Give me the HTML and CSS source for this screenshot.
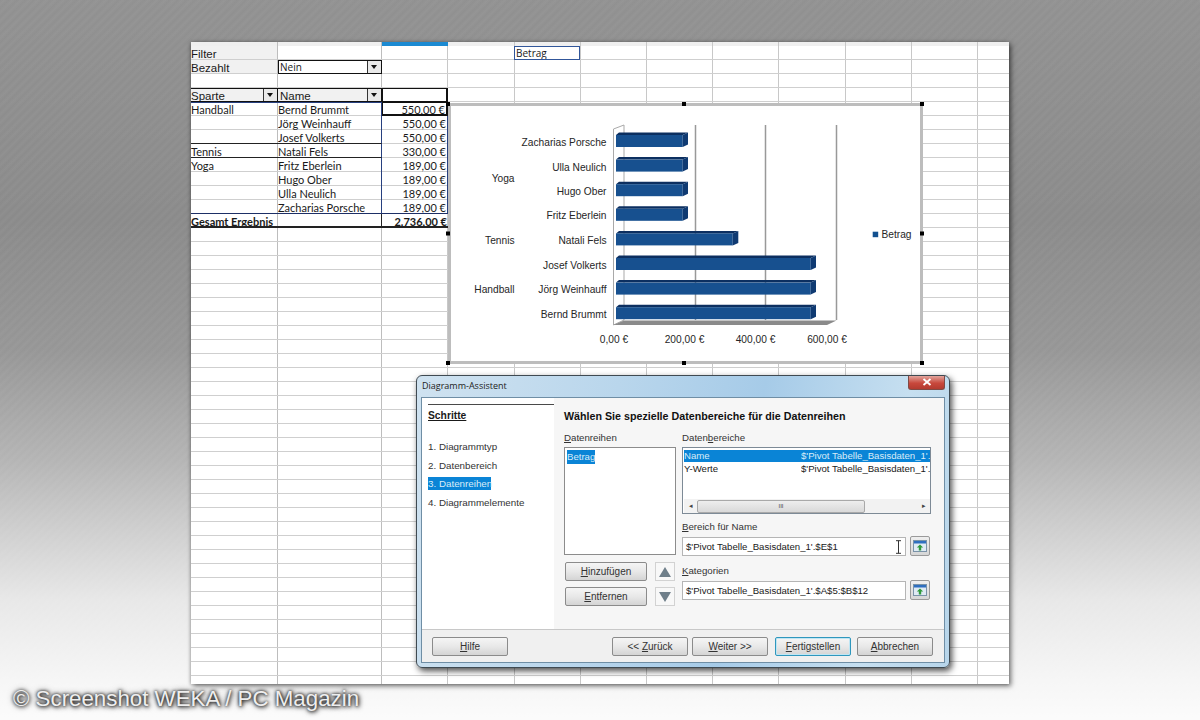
FILE: index.html
```html
<!DOCTYPE html>
<html lang="de">
<head>
<meta charset="utf-8">
<title>Diagramm-Assistent</title>
<link rel="stylesheet" href="styles.css">
</head>
<body>
<main class="stage">
  <section class="sheet">
    <div class="col-head"><span class="col-active"></span></div>
    <div class="pivot">
      <div class="cell label-cell">Filter</div><div class="cell"></div><div class="cell"></div><div class="cell"></div><div class="cell betrag">Betrag</div>
      <div class="cell label-cell">Bezahlt</div><div class="cell select-cell">Nein<span class="drop"></span></div><div class="cell wide"></div>
      <div class="cell full"></div>
      <div class="cell head-cell">Sparte<span class="drop"></span></div><div class="cell head-cell">Name<span class="drop"></span></div><div class="cell head-box"></div><div class="cell"></div><div class="cell"></div>

      <div class="cell top-navy">Handball</div><div class="cell top-navy name">Bernd Brummt</div><div class="cell amount active">550,00 €</div><div class="cell"></div><div class="cell"></div>
      <div class="cell"></div><div class="cell name">Jörg Weinhauff</div><div class="cell amount">550,00 €</div><div class="cell"></div><div class="cell"></div>
      <div class="cell group-end"></div><div class="cell name group-end">Josef Volkerts</div><div class="cell amount">550,00 €</div><div class="cell"></div><div class="cell"></div>
      <div class="cell group-end">Tennis</div><div class="cell name group-end">Natali Fels</div><div class="cell amount">330,00 €</div><div class="cell"></div><div class="cell"></div>
      <div class="cell">Yoga</div><div class="cell name">Fritz Eberlein</div><div class="cell amount">189,00 €</div><div class="cell"></div><div class="cell"></div>
      <div class="cell"></div><div class="cell name">Hugo Ober</div><div class="cell amount">189,00 €</div><div class="cell"></div><div class="cell"></div>
      <div class="cell"></div><div class="cell name">Ulla Neulich</div><div class="cell amount">189,00 €</div><div class="cell"></div><div class="cell"></div>
      <div class="cell last-row"></div><div class="cell name last-row">Zacharias Porsche</div><div class="cell amount last-row">189,00 €</div><div class="cell"></div><div class="cell"></div>
      <div class="cell total">Gesamt Ergebnis</div><div class="cell total"></div><div class="cell total amount">2.736,00 €</div><div class="cell"></div><div class="cell"></div>
    </div>

    <svg class="chart" viewBox="444 100 482 268" width="482" height="268">
      <rect class="chart-bg" x="449.5" y="104.5" width="472" height="258"/>
      <g class="walls">
        <polygon class="wall" points="613.5,129 624,125 624,320 613.5,325"/>
        <polygon class="floor" points="613.5,325 624,320.5 836.5,320.5 827,325"/>
        <path class="grid" d="M695.5 125V320M765.5 125V320M836.5 125V320"/>
      </g>
      <g>
        <polygon class="bar-top" points="616,135 619,132.500 688,132.500 682.700,135"/><rect class="bar-front" x="616" y="135" width="66.700" height="12"/><polygon class="bar-side" points="682.700,135 688,132.500 688,144.500 682.700,147"/>
        <polygon class="bar-top" points="616,159.600 619,157.100 688,157.100 682.700,159.600"/><rect class="bar-front" x="616" y="159.600" width="66.700" height="12"/><polygon class="bar-side" points="682.700,159.600 688,157.100 688,169.100 682.700,171.600"/>
        <polygon class="bar-top" points="616,184.200 619,181.700 688,181.700 682.700,184.200"/><rect class="bar-front" x="616" y="184.200" width="66.700" height="12"/><polygon class="bar-side" points="682.700,184.200 688,181.700 688,193.700 682.700,196.200"/>
        <polygon class="bar-top" points="616,208.800 619,206.300 688,206.300 682.700,208.800"/><rect class="bar-front" x="616" y="208.800" width="66.700" height="12"/><polygon class="bar-side" points="682.700,208.800 688,206.300 688,218.300 682.700,220.800"/>
        <polygon class="bar-top" points="616,233.400 619,230.900 738.300,230.900 732.700,233.400"/><rect class="bar-front" x="616" y="233.400" width="116.700" height="12"/><polygon class="bar-side" points="732.700,233.400 738.300,230.900 738.300,242.900 732.700,245.400"/>
        <polygon class="bar-top" points="616,258 619,255.500 816,255.500 810.700,258"/><rect class="bar-front" x="616" y="258" width="194.700" height="12"/><polygon class="bar-side" points="810.700,258 816,255.500 816,267.500 810.700,270"/>
        <polygon class="bar-top" points="616,282.600 619,280.100 816,280.100 810.700,282.600"/><rect class="bar-front" x="616" y="282.600" width="194.700" height="12"/><polygon class="bar-side" points="810.700,282.600 816,280.100 816,292.100 810.700,294.600"/>
        <polygon class="bar-top" points="616,307.200 619,304.700 816,304.700 810.700,307.200"/><rect class="bar-front" x="616" y="307.200" width="194.700" height="12"/><polygon class="bar-side" points="810.700,307.200 816,304.700 816,316.700 810.700,319.200"/>
      </g>
      <g class="axis-end">
        <text x="606.500" y="146">Zacharias Porsche</text>
        <text x="606.500" y="171">Ulla Neulich</text>
        <text x="606.500" y="195">Hugo Ober</text>
        <text x="606.500" y="219">Fritz Eberlein</text>
        <text x="606.500" y="244">Natali Fels</text>
        <text x="606.500" y="269">Josef Volkerts</text>
        <text x="606.500" y="293">Jörg Weinhauff</text>
        <text x="606.500" y="318">Bernd Brummt</text>
        <text x="514.500" y="182">Yoga</text>
        <text x="514.500" y="244">Tennis</text>
        <text x="514.500" y="293">Handball</text>
      </g>
      <g class="axis-mid">
        <text x="614" y="343">0,00 €</text>
        <text x="684.500" y="343">200,00 €</text>
        <text x="755.500" y="343">400,00 €</text>
        <text x="827" y="343">600,00 €</text>
      </g>
      <rect class="bar-legend" x="872.700" y="231.700" width="5.500" height="5.500"/>
      <text class="legend" x="881.500" y="238">Betrag</text>
      <g class="handles">
        <rect x="446" y="102" width="4" height="4"/><rect x="682" y="102" width="4" height="4"/><rect x="920" y="102" width="4" height="4"/>
        <rect x="446" y="231.500" width="4" height="4"/><rect x="920" y="231.500" width="4" height="4"/>
        <rect x="446" y="361" width="4" height="4"/><rect x="682" y="361" width="4" height="4"/><rect x="920" y="361" width="4" height="4"/>
      </g>
    </svg>

    <div class="dialog">
      <header class="titlebar">
        <span class="title">Diagramm-Assistent</span>
        <span class="close"><svg viewBox="0 0 10 8" width="10" height="8"><path d="M1.500 1l7 6M8.500 1l-7 6"/></svg></span>
      </header>
      <div class="client">
        <div class="panes">
          <nav class="steps">
            <div class="steps-title">Schritte</div>
            <ol class="step-list">
              <li>1. Diagrammtyp</li>
              <li>2. Datenbereich</li>
              <li class="current">3. Datenreihen</li>
              <li>4. Diagrammelemente</li>
            </ol>
          </nav>
          <div class="page">
            <h1 class="page-title">Wählen Sie spezielle Datenbereiche für die Datenreihen</h1>
            <div class="page-cols">
              <div class="series">
                <div class="field-label"><u>D</u>atenreihen</div>
                <div class="listbox series-list"><span class="sel-text">Betrag</span></div>
                <div class="series-row first-row">
                  <button class="btn wide-btn"><u>H</u>inzufügen</button>
                  <span class="arrow-btn"><svg viewBox="0 0 12 10" width="12" height="10"><polygon points="6,0 12,10 0,10"/></svg></span>
                </div>
                <div class="series-row">
                  <button class="btn wide-btn"><u>E</u>ntfernen</button>
                  <span class="arrow-btn"><svg viewBox="0 0 12 10" width="12" height="10"><polygon points="0,0 12,0 6,10"/></svg></span>
                </div>
              </div>
              <div class="ranges">
                <div class="field-label">Daten<u>b</u>ereiche</div>
                <div class="listbox range-list">
                  <div class="range-row selected"><span>Name</span><span>$'Pivot Tabelle_Basisdaten_1'.</span></div>
                  <div class="range-row"><span>Y-Werte</span><span>$'Pivot Tabelle_Basisdaten_1'.</span></div>
                  <div class="scrollbar">
                    <span class="scroll-arrow">◂</span>
                    <span class="thumb">III</span>
                    <span class="scroll-arrow end">▸</span>
                  </div>
                </div>
                <div class="field-label gap-a"><u>B</u>ereich für Name</div>
                <div class="input-row">
                  <div class="input">$'Pivot Tabelle_Basisdaten_1'.$E$1<svg class="ibeam" viewBox="0 0 7 14" width="7" height="14"><path d="M1 .7h5M1 13.300h5M3.500 .7v12.600"/></svg></div>
                  <span class="pick"><svg viewBox="0 0 14 14" width="14" height="14"><rect x=".5" y="1.500" width="13" height="11" fill="#dfeaf4" stroke="#7a93a8"/><rect x="1" y="2" width="12" height="2.500" fill="#2f6fc0"/><path d="M7 5.500l3.200 3H8.200v3H5.800v-3H3.800z" fill="#2f9a3c"/></svg></span>
                </div>
                <div class="field-label gap-b"><u>K</u>ategorien</div>
                <div class="input-row">
                  <div class="input">$'Pivot Tabelle_Basisdaten_1'.$A$5:$B$12</div>
                  <span class="pick"><svg viewBox="0 0 14 14" width="14" height="14"><rect x=".5" y="1.500" width="13" height="11" fill="#dfeaf4" stroke="#7a93a8"/><rect x="1" y="2" width="12" height="2.500" fill="#2f6fc0"/><path d="M7 5.500l3.200 3H8.200v3H5.800v-3H3.800z" fill="#2f9a3c"/></svg></span>
                </div>
              </div>
            </div>
          </div>
        </div>
        <footer class="footer">
          <button class="btn"><u>H</u>ilfe</button>
          <div class="footer-nav">
            <button class="btn">&lt;&lt; <u>Z</u>urück</button>
            <button class="btn"><u>W</u>eiter &gt;&gt;</button>
            <button class="btn default"><u>F</u>ertigstellen</button>
            <button class="btn"><u>A</u>bbrechen</button>
          </div>
        </footer>
      </div>
    </div>
  </section>
  <p class="credit">© Screenshot WEKA / PC Magazin</p>
</main>
</body>
</html>
```

FILE: styles.css
```css
* { box-sizing: border-box; }
html, body { margin: 0; height: 720px; overflow: hidden; }
body {
  background-color: #8c8c8c;
  background-image:
    linear-gradient(to bottom, rgba(255,255,255,.06) 0, rgba(255,255,255,0) 220px, rgba(255,255,255,.1) 350px, rgba(255,255,255,.36) 460px, rgba(255,255,255,.585) 530px, rgba(255,255,255,.8) 600px, rgba(255,255,255,.92) 680px, rgba(255,255,255,.97) 720px),
    repeating-linear-gradient(135deg, #8a8a8a 0, #8f8f8f 3px, #8a8a8a 6px);
  font-family: "Liberation Sans", Arial, sans-serif;
  color: #1a1a1a;
}
.stage { height: 720px; padding: 42px 0 0 191px; position: relative; }

.sheet {
  position: relative;
  width: 818px;
  height: 642px;
  background-color: #fff;
  box-shadow: 2px 2px 5px rgba(0,0,0,.55), -1px 0 3px rgba(0,0,0,.2);
}
.col-head {
  height: 4px; position: relative;
  background-color: #efefef;
  background-image: linear-gradient(to right, transparent 86px, #bdbdbd 86px 87px, transparent 87px 190px, #bdbdbd 190px 191px, transparent 191px 323px, #c8c8c8 323px 324px, transparent 324px 389px, #c8c8c8 389px 390px, transparent 390px 455px, #c8c8c8 455px 456px, transparent 456px 521px, #c8c8c8 521px 522px, transparent 522px 587px, #c8c8c8 587px 588px, transparent 588px 654px, #c8c8c8 654px 655px, transparent 655px 720px, #c8c8c8 720px 721px, transparent 721px 786px, #c8c8c8 786px 787px, transparent 787px);
}
.col-active { display: block; width: 66px; height: 4px; margin-left: 191px; background: #1b8ad2; }

.pivot {
  display: grid;
  grid-template-columns: 87px 104px 66px 66px 66px;
  grid-auto-rows: 14px;
  height: 638px;
  width: 818px;
  font: 11px/15px Lato, sans-serif;
  background-image:
    repeating-linear-gradient(to bottom, transparent 0 13px, #cfcfcf 13px 14px),
    linear-gradient(to right, transparent 86px, #bdbdbd 86px 87px, transparent 87px 190px, #bdbdbd 190px 191px, transparent 191px 256px, #c8c8c8 256px 257px, transparent 257px 323px, #c8c8c8 323px 324px, transparent 324px 389px, #c8c8c8 389px 390px, transparent 390px 455px, #c8c8c8 455px 456px, transparent 456px 521px, #c8c8c8 521px 522px, transparent 522px 587px, #c8c8c8 587px 588px, transparent 588px 654px, #c8c8c8 654px 655px, transparent 655px 720px, #c8c8c8 720px 721px, transparent 721px 786px, #c8c8c8 786px 787px, transparent 787px);
}
.cell { padding: 0; white-space: nowrap; overflow: hidden; position: relative; }
.wide { grid-column: span 3; }
.full { grid-column: span 5; }
.label-cell, .head-cell { font: 11.500px/17px "Liberation Sans", sans-serif; background: #f1f1f1; }
.label-cell { border-bottom: 1px solid #cfcfcf; border-right: 1px solid #bdbdbd; }
.select-cell { border: 1px solid #111; padding-left: 1px; font: 10px/12px "Open Sans", sans-serif; }
.head-cell { border: 1px solid #111; border-width: 1px 1px 1px 0; padding-left: 0; line-height: 15px; }
.head-cell + .head-cell { padding-left: 2px; }
.head-box { border: 1px solid #111; border-right-width: 2px; background: #fff; }
.drop {
  position: absolute; right: 0; top: 0; width: 14px; height: 12px;
  background: #e9e9e9; border-left: 1px solid #333;
}
.drop::after {
  content: ""; position: absolute; left: 3px; top: 4px;
  border: 3.500px solid transparent; border-top: 4px solid #111; border-bottom: 0;
}
.betrag { border: 1px solid #31569a; background: #fff; font: 10px/12px "Open Sans", sans-serif; padding-left: 1px; }
.name { border-right: 1px solid #27407f; }
.top-navy { border-top: 1px solid #27407f; line-height: 14px; }
.group-end { border-bottom: 1px solid #222; }
.last-row { border-bottom: 1px solid #1d2f66; }
.amount { text-align: right; padding-right: 1px; border-right: 1px solid #27407f; }
.active { border: 2px solid #111; border-width: 1px 2px 2px 1px; line-height: 14px; }
.total { font-weight: 700; border-bottom: 2px solid #222; }
.total + .total { border-right: 1px solid #222; }
.amount.total { border-right: 0; }

.chart { position: absolute; left: 253px; top: 58px; overflow: visible; }
.chart text { font: 10.200px "Liberation Sans", sans-serif; fill: #262626; }
.chart-bg { fill: #fff; stroke: #bdbdbd; stroke-width: 3; }
.wall { fill: #fff; stroke: #a9a9a9; stroke-width: 1; }
.floor { fill: #8a8a8a; }
.grid { fill: none; stroke: #999; stroke-width: 1.500; }
.bar-top { fill: #0c2f60; }
.bar-front { fill: #17508f; }
.bar-side { fill: #0f3a72; }
.bar-legend { fill: #12508f; }
.axis-end text { text-anchor: end; }
.axis-mid text { text-anchor: middle; }
.handles rect { fill: #000; }

.dialog {
  position: absolute; left: 225px; top: 333px;
  width: 534px; height: 293px;
  padding: 0 4px 4px;
  display: flex; flex-direction: column;
  border-radius: 6px;
  border: 1px solid #3f4a52;
  background: linear-gradient(100deg, #cfe2f0 0, #b9d6ec 35%, #a6cbe8 60%, #c6dff0 85%, #b7d5ea 100%);
  box-shadow: 2px 3px 6px rgba(0,0,0,.7);
}
.titlebar { height: 21px; flex: none; display: flex; align-items: center; justify-content: space-between; padding: 0 0 2px 1px; }
.title { font: 9px "Open Sans", sans-serif; color: #222; }
.close {
  width: 37px; height: 14px; margin-top: -6px; margin-right: 0;
  display: flex; align-items: center; justify-content: center;
  background: linear-gradient(#e2a49c, #c8483c 55%, #b33b30);
  border: 1px solid #7f4a45; border-top: 0;
  border-radius: 0 0 3px 3px;
}
.close path { fill: none; stroke: #fff; stroke-width: 1.800; }
.client { flex: 1; display: flex; flex-direction: column; border: 1px solid #6f8ea5; background: #f0f0f0; min-height: 0; }
.panes { flex: 1; display: flex; min-height: 0; }
.steps { width: 132px; flex: none; background: #fff; padding: 6px 0 0 6px; font-size: 9.800px; }
.steps-title {
  border-top: 1px solid #4a4a4a; padding-top: 4px;
  font: 700 10.300px/14px "Liberation Sans", sans-serif; text-decoration: underline;
}
.step-list { list-style: none; margin: 17px 0 0; padding: 0; display: flex; flex-direction: column; gap: 5.670px; color: #333; }
.step-list li { height: 13px; line-height: 13px; white-space: nowrap; }
.step-list .current { width: 63px; background: #0a84d6; color: #d9ecf8; }
.page { flex: 1; padding: 11px 13px 0 10px; background: #f6f6f6; }
.page-title { margin: 0; font: 700 10.700px/14px "Liberation Sans", sans-serif; color: #111; }
.page-cols { display: flex; gap: 6px; margin-top: 9px; }
.series { width: 112px; flex: none; }
.ranges { flex: 1; min-width: 0; }
.field-label { font-size: 9.700px; line-height: 12px; color: #333; }
.listbox { background: #fff; border: 1px solid #8c8c8c; margin-top: 3px; font-size: 9.600px; }
.series-list { height: 108px; padding: 2px; line-height: 12px; }
.sel-text { background: #0a84d6; color: #d9ecf8; padding: 1px 0; display: inline-block; }
.series-row { display: flex; gap: 8px; margin-top: 6px; padding-left: 1px; }
.first-row { margin-top: 7px; }
.btn {
  width: 76px; height: 19px; padding: 0;
  border: 1px solid #8b8b8b; border-radius: 2px;
  background: linear-gradient(#f5f5f5, #e8e8e8 50%, #d4d4d4);
  font: 10px "Liberation Sans", sans-serif; color: #333;
}
.wide-btn { width: 82px; }
.arrow-btn {
  width: 20px; height: 19px; display: flex; align-items: center; justify-content: center;
  border: 1px solid #d2d2d2; background: #f8f8f8;
}
.arrow-btn polygon { fill: #6f7f8a; }
.range-list { height: 67px; display: flex; flex-direction: column; padding: 2px 0 0 1px; border-color: #7d8a96; }
.range-row { display: flex; height: 12px; line-height: 12px; padding-left: 0; }
.range-row + .range-row { margin-top: 1px; }
.range-row span:first-child { width: 117px; flex: none; }
.range-row span:last-child { white-space: nowrap; overflow: hidden; }
.range-row.selected { background: #0a84d6; color: #d9ecf8; }
.scrollbar { margin-top: auto; height: 14px; display: flex; align-items: center; background: #f2f2f2; color: #444; font-size: 7px; }
.scroll-arrow { width: 13px; text-align: center; }
.scroll-arrow.end { margin-left: auto; width: 13px; }
.thumb {
  width: 168px; height: 13px; border: 1px solid #a9a9a9; border-radius: 2px;
  background: linear-gradient(#eee, #d9d9d9);
  text-align: center; font-size: 6px; line-height: 11px;
}
.gap-a { margin-top: 7px; }
.gap-b { margin-top: 9px; }
.input-row { display: flex; align-items: center; justify-content: space-between; margin-top: 3px; padding-right: 1px; }
.input {
  width: 224px; height: 19px; padding-left: 3px;
  display: flex; align-items: center; position: relative;
  border: 1px solid #b5b5b5; background: #fff; font-size: 9.600px; white-space: nowrap; overflow: hidden;
}
.ibeam { position: absolute; right: 3px; top: 2px; }
.ibeam path { fill: none; stroke: #333; stroke-width: 1; }
.pick {
  width: 20px; height: 20px; display: flex; align-items: center; justify-content: center;
  border: 1px solid #9a9a9a; border-radius: 2px; background: linear-gradient(#efefef, #d6d6d6);
}
.footer {
  height: 33px; flex: none; padding: 7px 11px 0 10px;
  border-top: 1px solid #c8c8c8;
  display: flex; justify-content: space-between; align-items: flex-start;
  background: #f0f0f0;
}
.footer-nav { display: flex; gap: 4px; }
.default { border: 1px solid #2f97bd; box-shadow: inset 0 0 0 1px #bfe6f4; margin: 0 2px 0 3px; }

.credit {
  position: absolute; left: 13px; top: 686px; margin: 0;
  font: 22.300px/26px "Liberation Sans", sans-serif;
  color: #eee;
  text-shadow: 0 0 3px #222, 1px 1px 4px #222, 0 0 6px #555;
}
```
